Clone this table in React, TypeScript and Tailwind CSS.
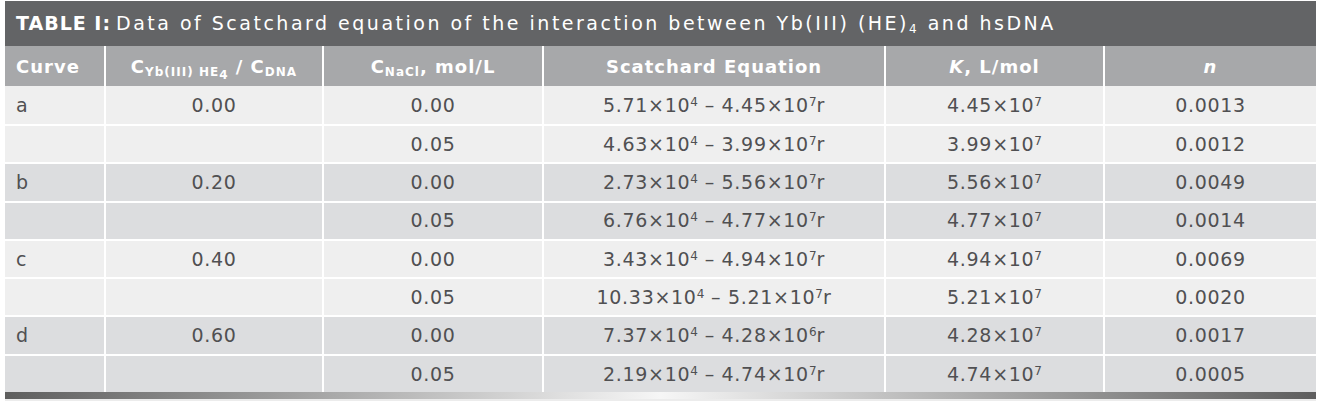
const cols = "grid grid-cols-[99px_216px_218px_340px_217px_211px] gap-x-[2px]";

type Row = {
  curve: string;
  ratio: string;
  nacl: string;
  a: string;
  ea: string;
  b: string;
  eb: string;
  k: string;
  ek: string;
  n: string;
  dark: boolean;
};

const rows: Row[] = [
  { curve: "a", ratio: "0.00", nacl: "0.00", a: "5.71", ea: "4", b: "4.45", eb: "7", k: "4.45", ek: "7", n: "0.0013", dark: false },
  { curve: "", ratio: "", nacl: "0.05", a: "4.63", ea: "4", b: "3.99", eb: "7", k: "3.99", ek: "7", n: "0.0012", dark: false },
  { curve: "b", ratio: "0.20", nacl: "0.00", a: "2.73", ea: "4", b: "5.56", eb: "7", k: "5.56", ek: "7", n: "0.0049", dark: true },
  { curve: "", ratio: "", nacl: "0.05", a: "6.76", ea: "4", b: "4.77", eb: "7", k: "4.77", ek: "7", n: "0.0014", dark: true },
  { curve: "c", ratio: "0.40", nacl: "0.00", a: "3.43", ea: "4", b: "4.94", eb: "7", k: "4.94", ek: "7", n: "0.0069", dark: false },
  { curve: "", ratio: "", nacl: "0.05", a: "10.33", ea: "4", b: "5.21", eb: "7", k: "5.21", ek: "7", n: "0.0020", dark: false },
  { curve: "d", ratio: "0.60", nacl: "0.00", a: "7.37", ea: "4", b: "4.28", eb: "6", k: "4.28", ek: "7", n: "0.0017", dark: true },
  { curve: "", ratio: "", nacl: "0.05", a: "2.19", ea: "4", b: "4.74", eb: "7", k: "4.74", ek: "7", n: "0.0005", dark: true },
];

function Sup({ children }: { children: string }) {
  return <sup className="text-[12px] -top-[6px] tracking-normal">{children}</sup>;
}

export default function App() {
  return (
    <div className="w-[1322px] h-[406px] bg-white pt-px font-['DejaVu_Sans',sans-serif] text-[19px]">
      <div className="ml-[5px] w-[1311px]">
        <div className="h-[45px] bg-[#636466] text-white flex items-center px-[11px] tracking-[2.5px]">
          <span className="font-bold mr-[5px] tracking-[1px]">TABLE I:</span>
          <span>
            Data of Scatchard equation of the interaction between Yb(III) (HE)
            <sub className="text-[12px]">4</sub> and hsDNA
          </span>
        </div>

        <div className={`${cols} h-[40px] bg-white text-white font-bold text-[18px] tracking-[1px]`}>
          <div className="bg-[#a7a8aa] flex items-center pl-[11px]">Curve</div>
          <div className="bg-[#a7a8aa] flex items-center justify-center">
            <span>
              C<sub className="text-[12px]">Yb(III) HE<sub className="text-[12px]">4</sub></sub> / C
              <sub className="text-[12px]">DNA</sub>
            </span>
          </div>
          <div className="bg-[#a7a8aa] flex items-center justify-center">
            <span>
              C<sub className="text-[12px]">NaCl</sub>, mol/L
            </span>
          </div>
          <div className="bg-[#a7a8aa] flex items-center justify-center">Scatchard Equation</div>
          <div className="bg-[#a7a8aa] flex items-center justify-center">
            <span>
              <i>K</i>, L/mol
            </span>
          </div>
          <div className="bg-[#a7a8aa] flex items-center justify-center">
            <i>n</i>
          </div>
        </div>

        <div className="bg-white text-[#505052] tracking-[0.7px]">
          {rows.map((r, i) => {
            const bg = r.dark ? "bg-[#dcdddf]" : "bg-[#efefef]";
            return (
              <div key={i} className={`${cols} ${i > 0 ? "mt-[2px] h-[36.3px]" : "h-[38px]"}`}>
                <div className={`${bg} flex items-center pl-[11px]`}>{r.curve}</div>
                <div className={`${bg} flex items-center justify-center`}>{r.ratio}</div>
                <div className={`${bg} flex items-center justify-center`}>{r.nacl}</div>
                <div className={`${bg} flex items-center justify-center`}>
                  <span>
                    {r.a}×10<Sup>{r.ea}</Sup> – {r.b}×10<Sup>{r.eb}</Sup>r
                  </span>
                </div>
                <div className={`${bg} flex items-center justify-center`}>
                  <span>
                    {r.k}×10<Sup>{r.ek}</Sup>
                  </span>
                </div>
                <div className={`${bg} flex items-center justify-center`}>{r.n}</div>
              </div>
            );
          })}
        </div>

        <div className="h-[7px] bg-[linear-gradient(to_right,#5e5e5e,#a9a9a9_25%,#f6f6f6_50%,#a9a9a9_75%,#5e5e5e)]" />
        <div className="h-[2px] bg-[#ececec]" />
      </div>
    </div>
  );
}
